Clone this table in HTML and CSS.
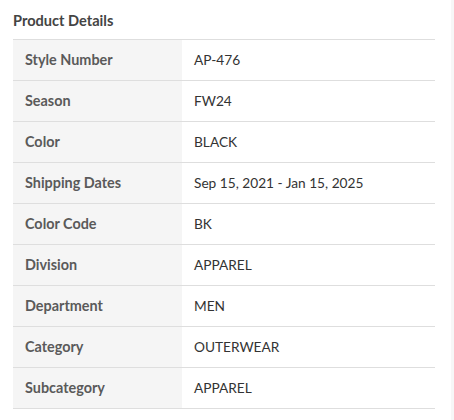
FILE: index.html
```html
<!DOCTYPE html>
<html lang="en">
<head>
    <meta charset="UTF-8"/>
    <title>Product Details</title>
    <link rel="stylesheet" href="styles.css">
</head>
<body>
<div class="page">
    <div class="details">
        <h3 class="details-title">Product Details</h3>
        <table class="details-table">
            <tr><th>Style Number</th><td>AP-476</td></tr>
            <tr><th>Season</th><td>FW24</td></tr>
            <tr><th>Color</th><td>BLACK</td></tr>
            <tr><th>Shipping Dates</th><td>Sep 15, 2021 - Jan 15, 2025</td></tr>
            <tr><th>Color Code</th><td>BK</td></tr>
            <tr><th>Division</th><td>APPAREL</td></tr>
            <tr><th>Department</th><td>MEN</td></tr>
            <tr><th>Category</th><td>OUTERWEAR</td></tr>
            <tr><th>Subcategory</th><td>APPAREL</td></tr>
        </table>
    </div>
    <div class="side-strip"></div>
</div>
</body>
</html>
```

FILE: styles.css
```css
/* Base */
body {
    margin: 0;
    font-family: Lato, "Open Sans", sans-serif;
    color: #333;
    background: #fff;
}

.page {
    display: flex;
    height: 420px;
    overflow: hidden;
}

.details {
    width: 422px;
    padding: 13px 16px 0 13px;
}

.side-strip {
    margin-left: auto;
    width: 3px;
    background-color: #f7f7f7;
}

/* Title */
.details-title {
    margin: 0 0 10px 0;
    font-size: 14.6px;
    font-weight: bold;
    color: #444;
    line-height: 16px;
}

/* Table */
.details-table {
    width: 100%;
    border-collapse: collapse;
    border-top: 1px solid #dedede;
    font-size: 14px;
}

.details-table tr {
    height: 41px;
    border-bottom: 1px solid #dedede;
}

.details-table th,
.details-table td {
    padding: 0 12px;
    text-align: left;
    vertical-align: middle;
    line-height: 16px;
}

.details-table th {
    width: 145px;
    background-color: #f5f5f5;
    color: #5a5a5a;
    font-size: 14.4px;
    font-weight: bold;
}

.details-table td {
    color: #333;
    font-size: 13.7px;
}
```
